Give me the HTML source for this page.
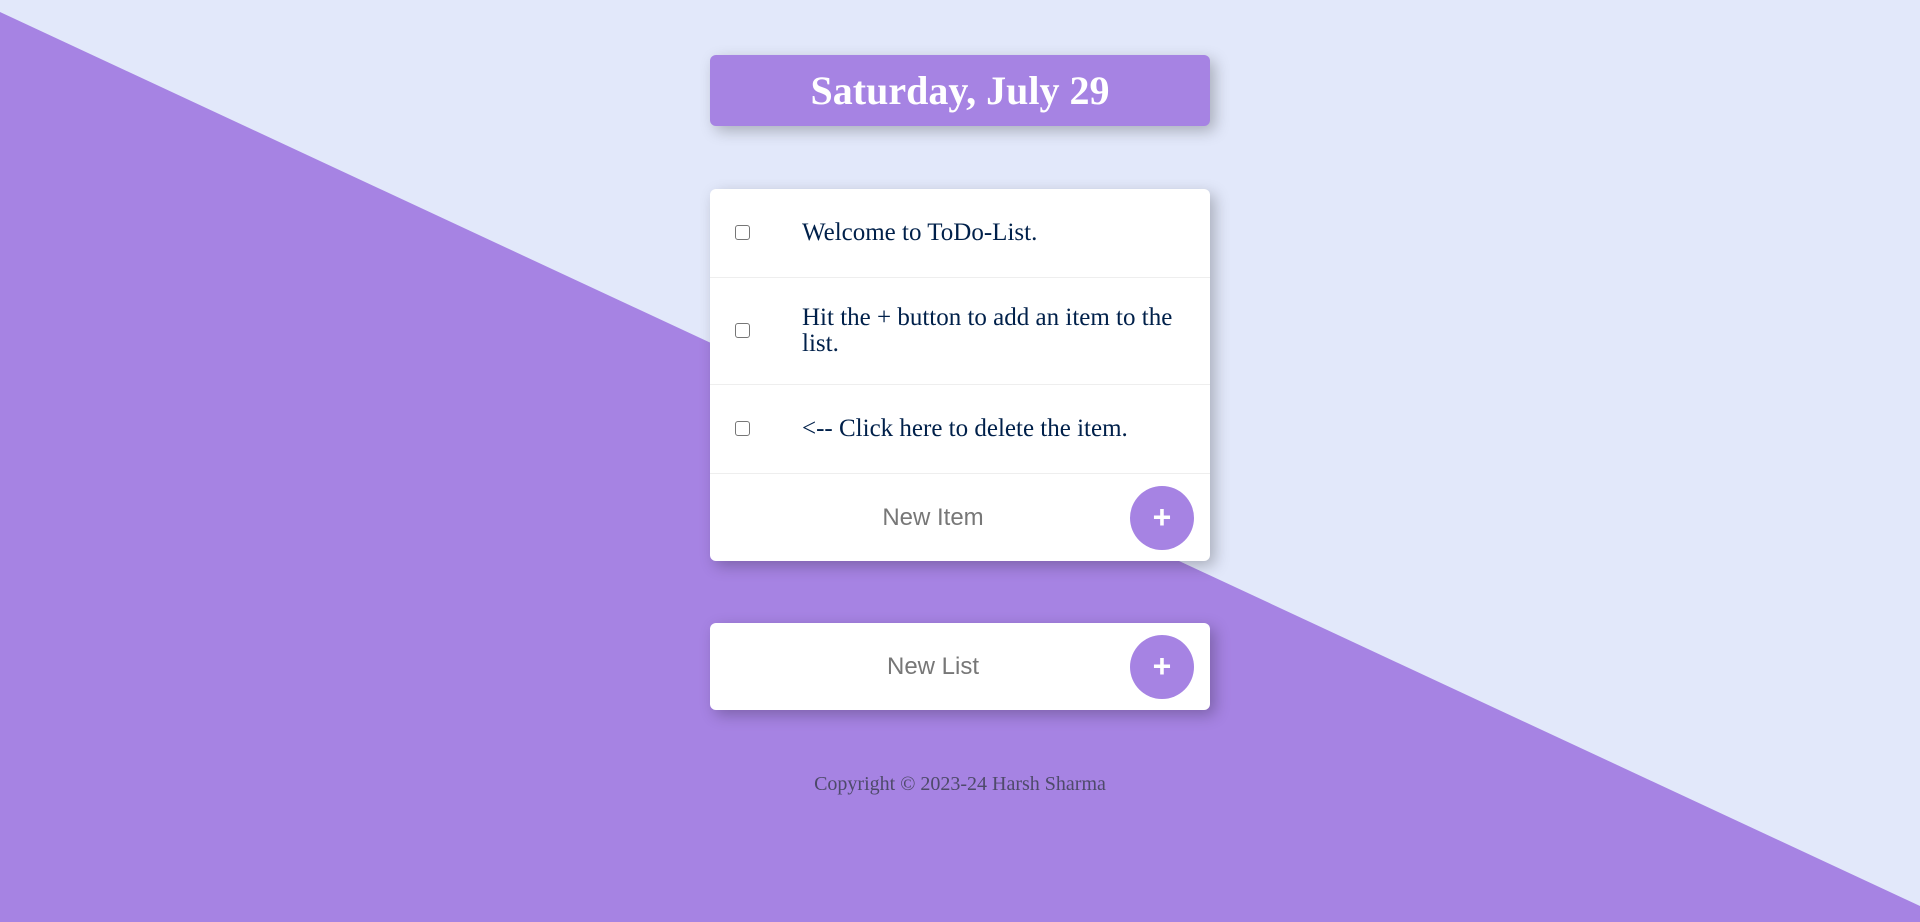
<!DOCTYPE html>
<html><head><style>
html,body{margin:0;padding:0}
body{width:1920px;height:922px;position:relative;overflow:hidden;background:#e2e8fa;font-family:"Liberation Serif",serif}
#bg{position:absolute;left:0;top:0}
.box{position:absolute;left:710px;width:500px;background:#fff;border-radius:6px;box-shadow:5px 5px 15px rgba(0,0,0,0.25)}
#head{top:55px;height:71px;background:#a683e3;color:#fff;font-weight:bold;font-size:40px;text-align:center;line-height:72px}
.item{position:relative;border-bottom:1px solid #eee;display:flex;align-items:center}
.item .cb{position:absolute;left:25px;width:13px;height:13px;border:1px solid #767676;border-radius:3px;top:50%;margin-top:-8px}
.item p{margin:0;padding-left:92px;padding-right:20px;font-size:25px;color:#00204a;line-height:26px}
.nw{position:relative;height:87px}
.nw span{position:absolute;left:0;width:446px;text-align:center;font-family:"Liberation Sans",sans-serif;font-size:24px;color:#777;top:50%;transform:translateY(-50%)}
.btn{position:absolute;left:420px;width:64px;height:64px;border-radius:50%;background:#a683e3;color:#fff;font-family:"Liberation Sans",sans-serif;font-weight:bold;font-size:32px;text-align:center;line-height:62px;top:50%;margin-top:-32px}
#foot{position:absolute;top:773px;left:0;width:1920px;text-align:center;font-size:20px;color:#4e4a6a}
</style></head><body>
<svg id="bg" width="1920" height="922"><polygon points="0,12 1920,906 1920,922 0,922" fill="#a683e3"/></svg>
<div class="box" id="head">Saturday, July 29</div>
<div class="box" style="top:189px;">
 <div class="item" style="height:88px"><div class="cb"></div><p>Welcome to ToDo-List.</p></div>
 <div class="item" style="height:106px"><div class="cb"></div><p>Hit the + button to add an item to the list.</p></div>
 <div class="item" style="height:88px"><div class="cb"></div><p>&lt;-- Click here to delete the item.</p></div>
 <div class="nw"><span>New Item</span><div class="btn">+</div></div>
</div>
<div class="box" style="top:623px;height:87px;"><div class="nw" style="height:87px"><span>New List</span><div class="btn">+</div></div></div>
<div id="foot">Copyright © 2023-24 Harsh Sharma</div>
</body></html>
